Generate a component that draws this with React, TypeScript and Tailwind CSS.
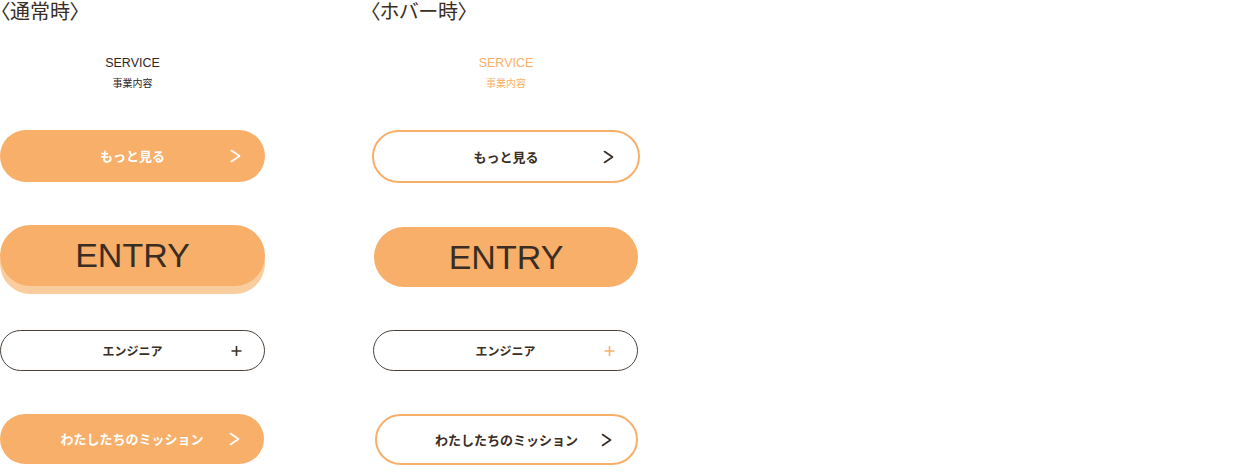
import { ReactNode } from "react";

const jp = "font-['Noto_Sans_CJK_JP',sans-serif]";
const en = "font-['Liberation_Sans',Arial,sans-serif]";

const Chevron = ({ color }: { color: string }) => (
  <svg width="11" height="13" viewBox="0 0 11 13" fill="none" className="absolute right-[24px] top-1/2 -translate-y-1/2">
    <path d="M1.5 1 L9.5 6.5 L1.5 12" stroke={color} strokeWidth="1.7" strokeLinecap="round" strokeLinejoin="round" />
  </svg>
);

const Plus = ({ color }: { color: string }) => (
  <svg width="11" height="11" viewBox="0 0 11 11" fill="none" className="absolute right-[22px] top-1/2 -translate-y-1/2">
    <path d="M5.5 0.5 V10.5 M0.5 5.5 H10.5" stroke={color} strokeWidth="1.6" />
  </svg>
);

const Heading = ({ children }: { children: ReactNode }) => (
  <div className={`${jp} h-[22px] text-[20px] leading-[22px] text-[#3a2e24] [font-feature-settings:'palt']`}>
    {children}
  </div>
);

const Service = ({ hover }: { hover?: boolean }) => (
  <div className={`mt-[33px] flex flex-col items-center ${hover ? "text-[#f7af6a]" : "text-[#2e261f]"}`}>
    <div className={`${en} text-[12.5px] leading-[16px]`}>SERVICE</div>
    <div className={`${jp} mt-[5px] text-[10px] leading-[14px]`}>事業内容</div>
  </div>
);

export default function App() {
  return (
    <div className="flex h-[476px] w-[1250px] bg-white">
      {/* 通常時 */}
      <div className="flex w-[265px] flex-col">
        <Heading>〈通常時〉</Heading>
        <Service />

        <button className={`${jp} relative mt-[40px] flex h-[52px] w-full items-center justify-center rounded-full bg-[#f7af6a] text-[13px] font-bold text-white`}>
          もっと見る
          <Chevron color="#ffffff" />
        </button>

        <button className={`${en} mt-[43px] flex h-[61px] w-full items-center justify-center rounded-full bg-[#f7af6a] text-[34px] text-[#3a2e24] shadow-[0_8px_0_#f9cd9e]`}>
          ENTRY
        </button>

        <button className={`${jp} relative mt-[44px] flex h-[41px] w-full items-center justify-center rounded-full border border-[#4a4038] bg-white text-[12px] font-bold text-[#3a2e24]`}>
          エンジニア
          <Plus color="#3a2e24" />
        </button>

        <button className={`${jp} relative mt-[43px] flex h-[50px] w-[264px] items-center justify-center rounded-full bg-[#f7af6a] text-[13px] font-bold text-white`}>
          わたしたちのミッション
          <Chevron color="#ffffff" />
        </button>
      </div>

      {/* ホバー時 */}
      <div className="ml-[107px] flex w-[268px] flex-col">
        <div className="-ml-[2px]">
          <Heading>〈ホバー時〉</Heading>
        </div>
        <Service hover />

        <button className={`${jp} relative mt-[40px] flex h-[53px] w-full items-center justify-center rounded-full border-2 border-[#f7af6a] bg-white text-[13px] font-bold text-[#3a2e24]`}>
          もっと見る
          <Chevron color="#3a2e24" />
        </button>

        <button className={`${en} mx-[2px] mt-[44px] flex h-[60px] w-[264px] items-center justify-center rounded-full bg-[#f7af6a] text-[34px] text-[#3a2e24]`}>
          ENTRY
        </button>

        <button className={`${jp} relative ml-[1px] mt-[43px] flex h-[41px] w-[265px] items-center justify-center rounded-full border border-[#4a4038] bg-white text-[12px] font-bold text-[#3a2e24]`}>
          エンジニア
          <Plus color="#f7af6a" />
        </button>

        <button className={`${jp} relative ml-[3px] mt-[43px] flex h-[51px] w-[263px] items-center justify-center rounded-full border-2 border-[#f7af6a] bg-white text-[13px] font-bold text-[#3a2e24]`}>
          わたしたちのミッション
          <Chevron color="#3a2e24" />
        </button>
      </div>
    </div>
  );
}
